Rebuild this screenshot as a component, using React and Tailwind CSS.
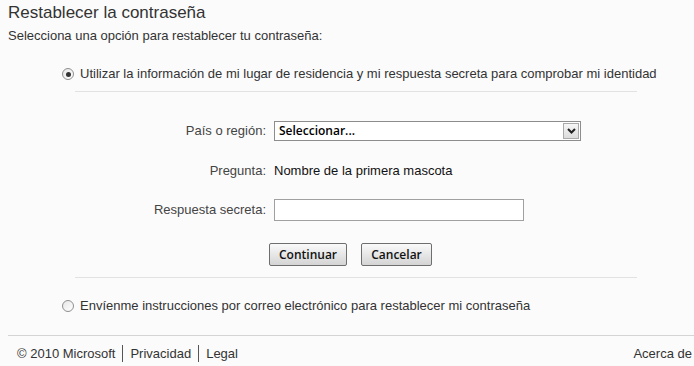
import React from 'react';

const Radio = ({ checked }) => (
  <span className="w-[12px] h-[12px] rounded-full border border-[#8f8f8f] bg-gradient-to-br from-[#e6e6e6] to-white flex items-center justify-center shrink-0">
    {checked && <span className="w-[5px] h-[5px] rounded-full bg-[#333]" />}
  </span>
);

const Row = ({ label, children, className = '' }) => (
  <div className={`flex items-center ${className}`}>
    <span className="w-[267px] text-right text-[#444] pr-[1px]">{label}</span>
    <div className="ml-[7px] flex items-center">{children}</div>
  </div>
);

export default function App() {
  return (
    <div className="w-[694px] h-[366px] overflow-hidden bg-[#fbfbfb] text-[13px] text-[#333] font-['Liberation_Sans',Arial,sans-serif] leading-[16px]">
      <div className="pl-[8px]">
        <h1 className="text-[17px] leading-[20px] pt-[3px] text-[#333]">Restablecer la contraseña</h1>
        <p className="mt-[5px] text-[#333]">Selecciona una opción para restablecer tu contraseña:</p>
      </div>

      <div className="flex items-center gap-[6px] pl-[62px] mt-[22px]">
        <Radio checked />
        <span>Utilizar la información de mi lugar de residencia y mi respuesta secreta para comprobar mi identidad</span>
      </div>
      <div className="ml-[75px] w-[562px] h-px bg-[#e2e2e2] mt-[9px]" />

      <Row label="País o región:" className="mt-[29px]">
        <div className="w-[307px] h-[20px] border border-[#8d8d8d] bg-white flex items-center">
          <span className="flex-1 pl-[4px] font-['Open_Sans',sans-serif] font-semibold text-[12px] text-black leading-[18px]">Seleccionar...</span>
          <span className="w-[16px] h-[16px] mr-[1px] border border-[#a9a9a9] bg-gradient-to-b from-[#f6f6f6] to-[#dcdcdc] flex items-center justify-center">
            <svg width="9" height="6" viewBox="0 0 9 6">
              <path d="M1 1l3.5 3.5L8 1" fill="none" stroke="#222" strokeWidth="2" />
            </svg>
          </span>
        </div>
      </Row>

      <Row label="Pregunta:" className="mt-[22px]">
        <span className="text-[#111]">Nombre de la primera mascota</span>
      </Row>

      <Row label="Respuesta secreta:" className="mt-[20px]">
        <div className="w-[250px] h-[22px] border border-[#a0a0a0] bg-white" />
      </Row>

      <div className="flex gap-[14px] pl-[269px] mt-[22px]">
        <button className="w-[78px] h-[23px] border border-[#6e6e6e] rounded-[2px] bg-gradient-to-b from-[#fafafa] to-[#d4d4d4] text-[12px] font-['Open_Sans',sans-serif] font-semibold text-[#111]">Continuar</button>
        <button className="w-[71px] h-[23px] border border-[#6e6e6e] rounded-[2px] bg-gradient-to-b from-[#fafafa] to-[#d4d4d4] text-[12px] font-['Open_Sans',sans-serif] font-semibold text-[#111]">Cancelar</button>
      </div>
      <div className="ml-[75px] w-[562px] h-px bg-[#e2e2e2] mt-[11px]" />

      <div className="flex items-center gap-[6px] pl-[62px] mt-[20px]">
        <Radio />
        <span>Envíenme instrucciones por correo electrónico para restablecer mi contraseña</span>
      </div>

      <div className="ml-[8px] h-px bg-[#d4d4d4] mt-[21px]" />
      <div className="flex items-center justify-between pl-[17px] pr-[2px] mt-[9px]">
        <div className="flex items-center">
          <span>© 2010 Microsoft</span>
          <span className="mx-[7px] w-px h-[17px] bg-[#555]" />
          <span>Privacidad</span>
          <span className="mx-[7px] w-px h-[17px] bg-[#555]" />
          <span>Legal</span>
        </div>
        <span>Acerca de</span>
      </div>
    </div>
  );
}
